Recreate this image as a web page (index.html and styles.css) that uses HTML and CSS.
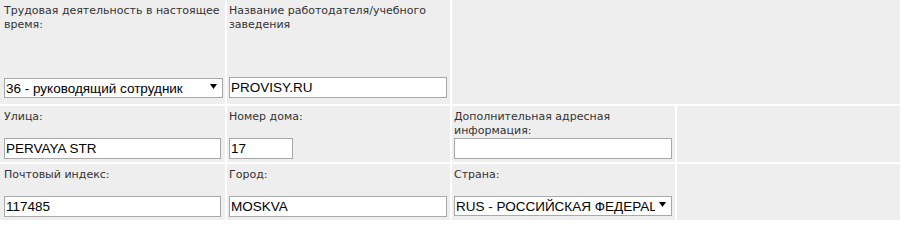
FILE: index.html
```html
<!DOCTYPE html>
<html lang="ru">
<head>
<meta charset="utf-8">
<title>Анкета</title>
<link rel="stylesheet" href="styles.css">
</head>
<body>
<div class="form">
  <div class="cell first tall">
    <div class="label">Трудовая деятельность в настоящее время:</div>
    <div class="select-wrap">
      <select class="select"><option>36 - руководящий сотрудник</option></select>
      <svg class="arrow" width="7" height="5" viewBox="0 0 7 5"><path d="M0 0H7L3.5 5Z" fill="#000"/></svg>
    </div>
  </div>
  <div class="cell tall">
    <div class="label">Название работодателя/учебного заведения</div>
    <input class="input wide-r" type="text" value="PROVISY.RU">
  </div>
  <div class="cell tall span2"></div>

  <div class="cell first">
    <div class="label">Улица:</div>
    <input class="input" type="text" value="PERVAYA STR">
  </div>
  <div class="cell">
    <div class="label">Номер дома:</div>
    <input class="input short" type="text" value="17">
  </div>
  <div class="cell">
    <div class="label">Дополнительная адресная информация:</div>
    <input class="input wide-r" type="text" value="">
  </div>
  <div class="cell"></div>

  <div class="cell first">
    <div class="label">Почтовый индекс:</div>
    <input class="input" type="text" value="117485">
  </div>
  <div class="cell">
    <div class="label">Город:</div>
    <input class="input wide-r" type="text" value="MOSKVA">
  </div>
  <div class="cell">
    <div class="label">Страна:</div>
    <div class="select-wrap country">
      <select class="select"><option>RUS - РОССИЙСКАЯ ФЕДЕРАЦИЯ</option></select>
      <svg class="arrow" width="7" height="5" viewBox="0 0 7 5"><path d="M0 0H7L3.5 5Z" fill="#000"/></svg>
    </div>
  </div>
  <div class="cell"></div>
</div>
</body>
</html>
```
FILE: styles.css
```css
html, body {
  margin: 0;
  padding: 0;
  background: #fff;
}

.form {
  display: grid;
  grid-template-columns: 225px 223px 223px 223px;
  grid-template-rows: 104px 56px 56px;
  gap: 2px;
}

.cell {
  background: #eeeeee;
  padding: 4px 2px 3px 2px;
  display: flex;
  flex-direction: column;
  justify-content: space-between;
  align-items: flex-start;
  box-sizing: border-box;
  min-width: 0;
}

.cell.first {
  padding-left: 4px;
}

.cell.tall {
  padding-bottom: 6px;
}

.cell.span2 {
  grid-column: span 2;
}

.label {
  font-family: "DejaVu Sans", Verdana, sans-serif;
  font-size: 11px;
  line-height: 14px;
  color: #333;
  max-width: 221px;
}

.input {
  box-sizing: border-box;
  width: 217px;
  height: 21px;
  margin: 0;
  border: 1px solid #a9a9a9;
  border-radius: 0;
  padding: 0 1px;
  background: #fff;
  font-family: "Liberation Sans", Arial, sans-serif;
  font-size: 13.5px;
  color: #000;
  outline: none;
}

.input.wide-r {
  width: 218px;
}

.input.short {
  width: 64px;
}

.select-wrap {
  position: relative;
  width: 219px;
  height: 20px;
}

.select-wrap.country {
  width: 218px;
  margin-bottom: 1px;
}

.select {
  -webkit-appearance: none;
  appearance: none;
  box-sizing: border-box;
  width: 100%;
  height: 20px;
  margin: 0;
  border: 1px solid #a9a9a9;
  border-radius: 0;
  padding: 0 16px 0 1px;
  background: #fff;
  font-family: "Liberation Sans", Arial, sans-serif;
  font-size: 13.5px;
  color: #000;
  outline: none;
}

.arrow {
  position: absolute;
  right: 6px;
  top: 6px;
  pointer-events: none;
}
```
